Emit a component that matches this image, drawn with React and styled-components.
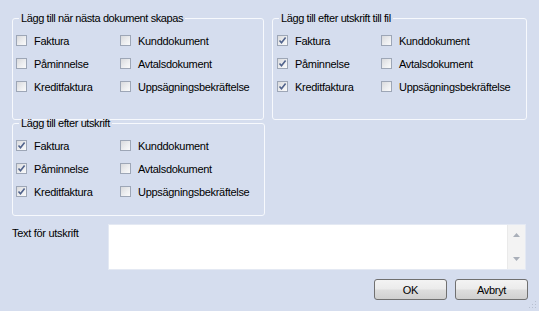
import React from 'react';
import styled, { createGlobalStyle } from 'styled-components';

const COLORS = {
  bg: '#d5ddee',
  frame: '#f7f9fd',
  text: '#000000',
  boxBorder: '#9da6b6',
  check: '#51638c',
};

const GlobalStyle = createGlobalStyle`
  html, body {
    margin: 0;
    background: ${COLORS.bg};
  }
  body {
    font-family: "Liberation Sans", Arial, sans-serif;
    font-size: 11px;
    color: ${COLORS.text};
  }
`;

const LABELS = [
  ['Faktura', 'Kunddokument'],
  ['Påminnelse', 'Avtalsdokument'],
  ['Kreditfaktura', 'Uppsägningsbekräftelse'],
];

const CheckBox = ({ checked, label }) => (
  <Option>
    <Box>
      {checked && (
        <svg width="9" height="9" viewBox="0 0 9 9">
          <path d="M1.5 4.5 L3.5 6.8 L7.6 1.6" fill="none" stroke={COLORS.check} strokeWidth="1.6" />
        </svg>
      )}
    </Box>
    <OptionText>{label}</OptionText>
  </Option>
);

const Group = ({ title, checked = [], width, height, gap }) => (
  <Fieldset style={{ width, height }}>
    <Legend>{title}</Legend>
    <Grid $gap={gap}>
      {LABELS.map((row, i) =>
        row.map((label, j) => (
          <CheckBox key={label} label={label} checked={j === 0 && checked.includes(i)} />
        ))
      )}
    </Grid>
  </Fieldset>
);

const App = () => (
  <>
    <GlobalStyle />
    <Form>
      <TopRow>
        <Group title="Lägg till när nästa dokument skapas" width={252} height={108} gap={3} />
        <Group title="Lägg till efter utskrift till fil" width={255} height={108} gap={4} checked={[0, 1, 2]} />
      </TopRow>
      <Group title="Lägg till efter utskrift" width={253} height={99} gap={3} checked={[0, 1, 2]} />
      <TextRow>
        <FieldLabel>Text för utskrift</FieldLabel>
        <TextArea>
          <TextInput />
          <ScrollBar>
            <Arrow viewBox="0 0 7 4" width="7" height="4">
              <path d="M0 4 L3.5 0 L7 4 Z" fill="#a9afb9" />
            </Arrow>
            <Arrow viewBox="0 0 7 4" width="7" height="4">
              <path d="M0 0 L3.5 4 L7 0 Z" fill="#a9afb9" />
            </Arrow>
          </ScrollBar>
        </TextArea>
      </TextRow>
      <ButtonRow>
        <Button>OK</Button>
        <Button>Avbryt</Button>
        <Grip width="8" height="8" viewBox="0 0 8 8">
          <rect x="6" y="0" width="1" height="1" fill="#b8c0d0" />
          <rect x="3" y="3" width="1" height="1" fill="#b8c0d0" />
          <rect x="6" y="3" width="1" height="1" fill="#b8c0d0" />
          <rect x="0" y="6" width="1" height="1" fill="#b8c0d0" />
          <rect x="3" y="6" width="1" height="1" fill="#b8c0d0" />
          <rect x="6" y="6" width="1" height="1" fill="#b8c0d0" />
        </Grip>
      </ButtonRow>
    </Form>
  </>
);

const Form = styled.div`
  position: relative;
  box-sizing: border-box;
  width: 539px;
  height: 311px;
  padding: 12px 12px 0 12px;
  display: flex;
  flex-direction: column;
`;

const TopRow = styled.div`
  display: flex;
  gap: 8px;
  margin-bottom: -3px;
`;

const Fieldset = styled.fieldset`
  box-sizing: border-box;
  margin: 0;
  padding: 4px 0 0 3px;
  border: 1px solid ${COLORS.frame};
  border-radius: 3px;
  min-width: 0;
`;

const Legend = styled.legend`
  padding: 0 2px;
  margin-left: 3px;
  line-height: 13px;
  font-size: 11px;
  letter-spacing: -0.4px;
`;

const Grid = styled.div`
  display: grid;
  grid-template-columns: 104px auto;
  grid-auto-rows: 23px;
  margin-left: ${p => p.$gap - 3}px;
`;

const Option = styled.label`
  display: flex;
  align-items: center;
  gap: 7px;
  white-space: nowrap;
`;

const Box = styled.span`
  box-sizing: border-box;
  width: 11px;
  height: 11px;
  border: 1px solid ${COLORS.boxBorder};
  background: linear-gradient(135deg, #d9dadd 0%, #eeeff1 60%, #fafafa 100%);
  display: flex;
  align-items: center;
  justify-content: center;
`;

const OptionText = styled.span`
  letter-spacing: -0.3px;
`;

const TextRow = styled.div`
  display: flex;
  margin-top: 8px;
`;

const FieldLabel = styled.div`
  width: 96px;
  padding-top: 3px;
  letter-spacing: -0.3px;
`;

const TextArea = styled.div`
  display: flex;
  width: 418px;
  height: 46px;
  background: #ffffff;
  border: 1px solid #e4e9f3;
  box-sizing: border-box;
`;

const TextInput = styled.div`
  flex: 1;
`;

const ScrollBar = styled.div`
  width: 17px;
  background: #f3f3f3;
  border-left: 1px solid #eaeaea;
  display: flex;
  flex-direction: column;
  justify-content: space-between;
  align-items: center;
  padding: 8px 0;
`;

const Arrow = styled.svg`
  display: block;
`;

const ButtonRow = styled.div`
  display: flex;
  justify-content: flex-end;
  gap: 8px;
  margin-top: 9px;
  margin-right: -1px;
`;

const Button = styled.button`
  width: 73px;
  height: 21px;
  padding: 0;
  border: 1px solid #707070;
  border-radius: 3px;
  background: linear-gradient(#f3f3f3 0%, #ebebeb 48%, #dddddd 52%, #d0d0d0 100%);
  font-family: "Liberation Sans", Arial, sans-serif;
  font-size: 11px;
  color: #000;
  letter-spacing: -0.3px;
`;

const Grip = styled.svg`
  position: absolute;
  right: 2px;
  bottom: 2px;
`;

export default App;
